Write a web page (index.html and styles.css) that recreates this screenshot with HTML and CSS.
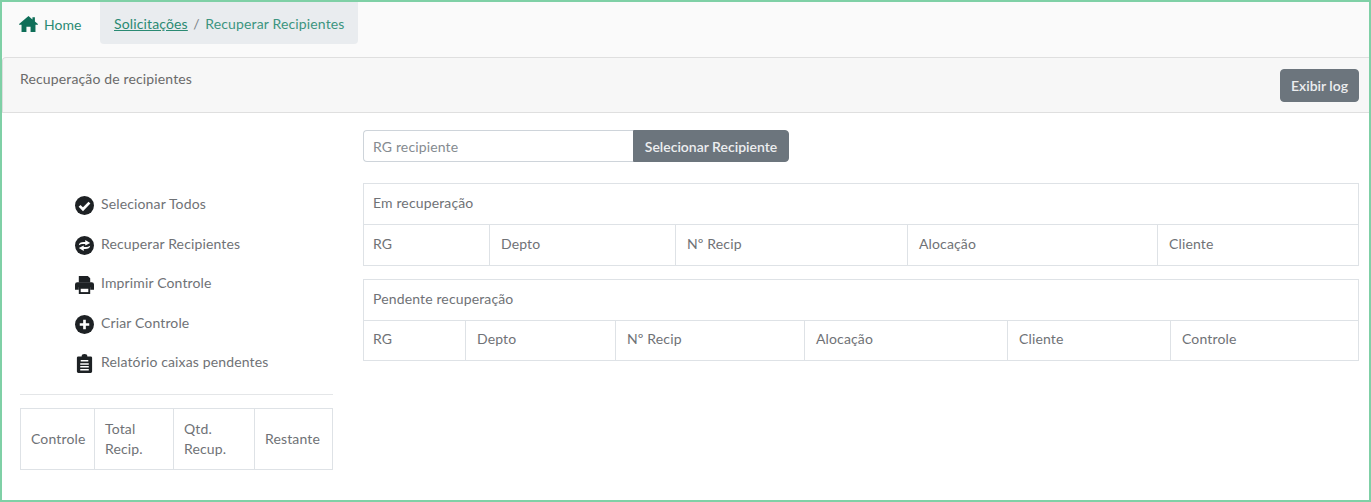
FILE: index.html
```html
<!DOCTYPE html>
<html lang="pt-BR">
<head>
    <meta charset="UTF-8">
    <title>Recuperar Recipientes</title>
    <link rel="stylesheet" href="styles.css">
</head>
<body>
    <div class="frame">
        <!-- Top navigation -->
        <nav class="topbar">
            <a class="home-link" href="#">
                <svg class="home-icon" viewBox="0 0 20 17"><path d="M10 0 L14.2 3.6 V1.2 H16.8 V5.8 L20 8.6 V9.4 H17.4 V17 H12.2 V11.4 H7.8 V17 H2.6 V9.4 H0 V8.6 Z"/></svg>
                Home
            </a>
            <div class="breadcrumb">
                <a href="#">Solicitações</a>
                <span class="sep">/</span>
                <span class="current">Recuperar Recipientes</span>
            </div>
        </nav>

        <div class="card-header">
            <span class="card-title">Recuperação de recipientes</span>
            <button class="btn btn-log">Exibir log</button>
        </div>

        <div class="content">
            <!-- Left column: actions and totals -->
            <aside class="side">
                <ul class="actions">
                    <li class="action">
                        <svg class="icon" viewBox="0 0 20 20"><circle cx="10" cy="10" r="10"/><path class="cut" d="M4.8 10.4 L8.4 14 L15.2 7"/></svg>
                        Selecionar Todos
                    </li>
                    <li class="action">
                        <svg class="icon" viewBox="0 0 20 20"><circle cx="10" cy="10" r="10"/><path class="fillcut" d="M4 9.8 C4.3 7.6 6.2 6.4 9 6.4 H10.8 V4.2 L16 7.4 L10.8 10 V8.4 H8.6 C6.8 8.4 5.6 8.9 4 9.8 Z"/><path class="fillcut" d="M16 10.2 C15.7 12.4 13.8 13.6 11 13.6 H9.2 V15.8 L4 12.6 L9.2 10 V11.6 H11.4 C13.2 11.6 14.4 11.1 16 10.2 Z"/></svg>
                        Recuperar Recipientes
                    </li>
                    <li class="action">
                        <svg class="icon" viewBox="0 0 20 20"><path d="M4 1 H13.5 L16 3.5 V8 H4 Z"/><path d="M2.5 7.5 H17.5 A2.5 2.5 0 0 1 20 10 V15.5 H16 V13 H4 V15.5 H0 V10 A2.5 2.5 0 0 1 2.5 7.5 Z"/><path d="M4 12.5 H16 V20 H4 Z"/><path class="fillcut" d="M6 14.5 H14 V18 H6 Z"/></svg>
                        Imprimir Controle
                    </li>
                    <li class="action">
                        <svg class="icon" viewBox="0 0 20 20"><circle cx="10" cy="10" r="10"/><path class="cut" d="M10 5 V15 M5 10 H15"/></svg>
                        Criar Controle
                    </li>
                    <li class="action">
                        <svg class="icon" viewBox="0 0 20 20"><path d="M3.5 2.5 H7 A3 2.5 0 0 1 13 2.5 H16.5 A1.5 1.5 0 0 1 18 4 V18.5 A1.5 1.5 0 0 1 16.5 20 H3.5 A1.5 1.5 0 0 1 2 18.5 V4 A1.5 1.5 0 0 1 3.5 2.5 Z"/><path class="thin" d="M6 7 H14 M5.5 10.5 H14.5 M5.5 13.5 H14.5 M5.5 16.5 H14.5"/></svg>
                        Relatório caixas pendentes
                    </li>
                </ul>
                <table class="grid totals">
                    <colgroup>
                        <col class="c-controle">
                        <col class="c-total">
                        <col class="c-qtd">
                        <col>
                    </colgroup>
                    <tr>
                        <td>Controle</td>
                        <td>Total Recip.</td>
                        <td>Qtd. Recup.</td>
                        <td>Restante</td>
                    </tr>
                </table>
            </aside>

            <!-- Right column: search and lists -->
            <main class="main">
                <div class="search">
                    <input class="search-input" type="text" placeholder="RG recipiente">
                    <button class="btn btn-search">Selecionar Recipiente</button>
                </div>

                <table class="grid list">
                    <colgroup>
                        <col class="a-rg">
                        <col class="a-depto">
                        <col class="a-recip">
                        <col class="a-aloc">
                        <col>
                    </colgroup>
                    <tr><td colspan="5">Em recuperação</td></tr>
                    <tr>
                        <td>RG</td>
                        <td>Depto</td>
                        <td>Nº Recip</td>
                        <td>Alocação</td>
                        <td>Cliente</td>
                    </tr>
                </table>

                <table class="grid list list-b">
                    <colgroup>
                        <col class="b-rg">
                        <col class="b-depto">
                        <col class="b-recip">
                        <col class="b-aloc">
                        <col class="b-cliente">
                        <col>
                    </colgroup>
                    <tr><td colspan="6">Pendente recuperação</td></tr>
                    <tr>
                        <td>RG</td>
                        <td>Depto</td>
                        <td>Nº Recip</td>
                        <td>Alocação</td>
                        <td>Cliente</td>
                        <td>Controle</td>
                    </tr>
                </table>
            </main>
        </div>
    </div>
</body>
</html>
```

FILE: styles.css
```css
* {
    box-sizing: border-box;
    margin: 0;
    padding: 0;
}

html, body {
    height: 100%;
}

body {
    font-family: 'Lato', 'Open Sans', sans-serif;
    font-size: 14px;
    letter-spacing: 0.14px;
    color: #6f7276;
    background-color: #fff;
}

.frame {
    height: 502px;
    border: 2px solid #7fd0a6;
    display: flex;
    flex-direction: column;
}

/* Top navigation */
.topbar {
    height: 55px;
    flex-shrink: 0;
    padding-left: 17px;
    background-color: #fafafa;
    display: flex;
    align-items: flex-start;
}

.home-link {
    width: 81px;
    height: 44px;
    display: flex;
    align-items: center;
    gap: 6px;
    color: #2a8a73;
    text-decoration: none;
    letter-spacing: 0;
}

.home-icon {
    width: 19px;
    height: 16px;
    fill: #0e6e58;
}

.breadcrumb {
    width: 258px;
    height: 42px;
    padding: 1px 0 0 14px;
    display: flex;
    align-items: center;
    gap: 5.5px;
    background-color: #e9ecef;
    border-radius: 0 0 4px 4px;
    color: #3c9580;
}

.breadcrumb a {
    color: #2a8a73;
}

.breadcrumb .sep {
    color: #7b8287;
}

/* Card header */
.card-header {
    height: 56px;
    flex-shrink: 0;
    padding: 12px 10px 0 17px;
    display: flex;
    justify-content: space-between;
    align-items: flex-start;
    background-color: #f7f7f7;
    border: 1px solid #dfdfdf;
    border-right: 0;
    border-top-left-radius: 4px;
}

.card-title {
    color: #6a6a6a;
}

.btn {
    font-family: inherit;
    font-size: 14px;
    font-weight: 600;
    letter-spacing: 0;
    color: #eceef0;
    background-color: #6c757d;
    border: 1px solid #6c757d;
    border-radius: 4px;
}

.btn-log {
    width: 79px;
    height: 33px;
    margin-top: -1px;
}

/* Main layout */
.content {
    flex: 1;
    display: flex;
    gap: 30px;
    padding: 17px 10px 0 18px;
}

.side {
    width: 313px;
    flex-shrink: 0;
}

.actions {
    list-style: none;
    height: 265px;
    padding: 65px 0 0 55px;
    margin-bottom: 13px;
    border-bottom: 1px solid #e4e6e8;
}

.action {
    height: 39.5px;
    display: flex;
    align-items: flex-start;
    gap: 7px;
}

.icon {
    width: 19px;
    height: 19px;
    margin-top: 1px;
    flex-shrink: 0;
    fill: #1d2124;
}

.icon .cut {
    fill: none;
    stroke: #fff;
    stroke-width: 2.8;
}

.icon .fillcut {
    fill: #fff;
}

.icon .thin {
    fill: none;
    stroke: #fff;
    stroke-width: 1.6;
}

/* Tables */
.grid {
    width: 100%;
    border-collapse: collapse;
    table-layout: fixed;
}

.grid td {
    border: 1px solid #dee2e6;
    padding: 0 10px;
}

.totals {
    height: 62px;
    line-height: 20px;
}

.c-controle { width: 74px; }
.c-total { width: 79px; }
.c-qtd { width: 81px; }

.main {
    flex: 1;
}

.search {
    display: flex;
    height: 32px;
    margin-bottom: 21px;
}

.search-input {
    width: 270px;
    padding: 0 9px;
    font-family: inherit;
    font-size: 14px;
    letter-spacing: inherit;
    color: #6c757d;
    border: 1px solid #ced4da;
    border-right: 0;
    border-radius: 4px 0 0 4px;
    outline: none;
}

.search-input::placeholder {
    color: #858b90;
}

.btn-search {
    width: 156px;
    border-radius: 0 4px 4px 0;
}

.list {
    margin-bottom: 13px;
}

.list td {
    height: 41px;
    padding: 0 11px 4px;
}

.list td:first-child {
    padding-left: 9px;
}

.list-b tr:last-child td {
    height: 40px;
}

.a-rg { width: 126px; }
.a-depto { width: 186px; }
.a-recip { width: 232px; }
.a-aloc { width: 250px; }

.b-rg { width: 102px; }
.b-depto { width: 150px; }
.b-recip { width: 189px; }
.b-aloc { width: 203px; }
.b-cliente { width: 163px; }
```
